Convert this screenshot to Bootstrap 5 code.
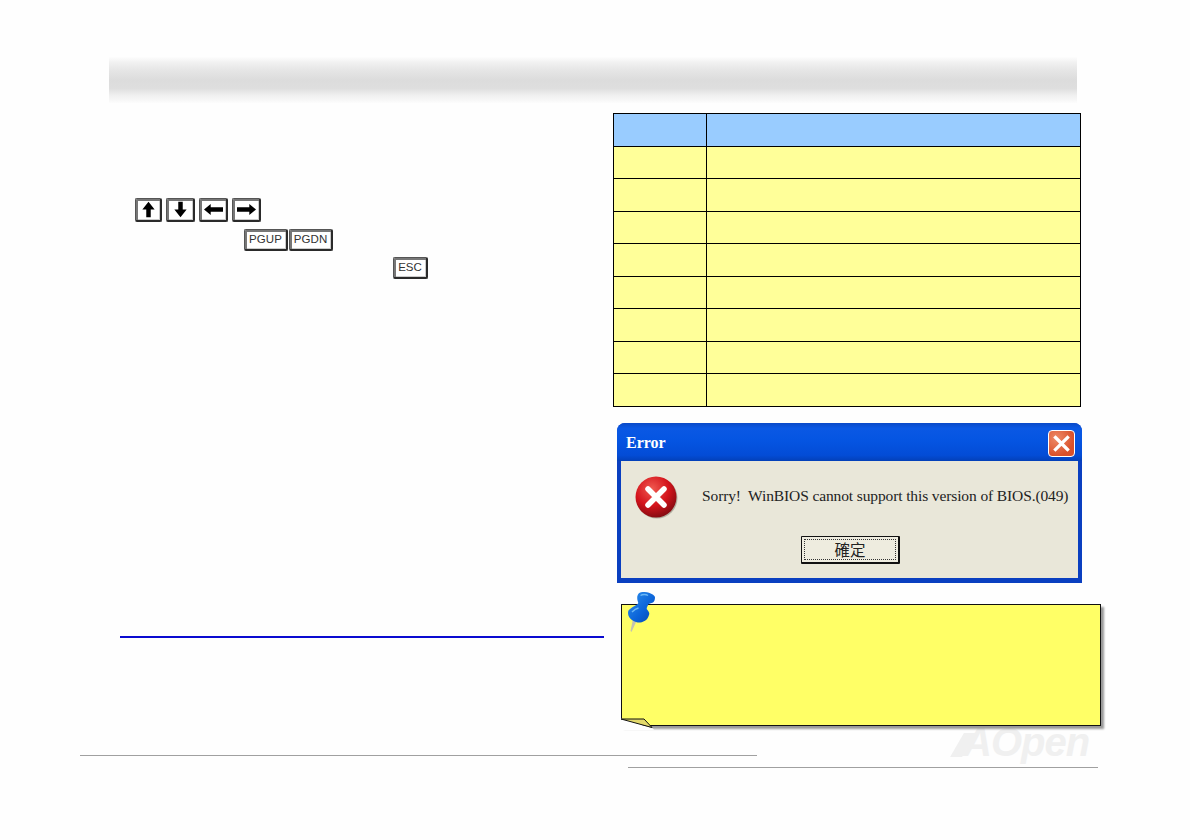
<!DOCTYPE html>
<html lang="en">
<head>
<meta charset="utf-8">
<title>BIOS error</title>
<link href="https://cdn.jsdelivr.net/npm/bootstrap@5.3.0/dist/css/bootstrap.min.css" rel="stylesheet">
<style>
html,body{height:100%;}
body{background:#fefefe;font-family:"Liberation Sans",sans-serif;overflow:hidden;}
.sheet{width:1190px;height:840px;padding-top:57px;position:relative;}
.band{width:968px;height:46px;margin-left:109px;background:linear-gradient(180deg,#fdfdfd 0,#f1f1f1 12%,#e6e6e6 28%,#dcdcdc 50%,#dedede 68%,#f0f0f0 84%,#fcfcfc 100%);}
.main-row{margin-top:10px;height:632px;}
.left-col{width:484px;margin-left:120px;padding-top:85px;}
.right-col{width:468px;margin-left:9px;}
.keyrow-a{margin-left:15px;height:24px;gap:4px;}
.keyrow-b{margin-left:124px;margin-top:7px;height:22px;gap:1px;}
.keyrow-c{margin-left:273px;margin-top:6px;height:22px;}
.kcap{display:flex;align-items:center;justify-content:center;background:#fff;color:#333;font-size:11.5px;line-height:1;
  border:1px solid #555;border-right:2px solid #2a2a2a;border-bottom:2px solid #2a2a2a;box-shadow:inset 1px 1px 0 1px #777,inset -1px -1px 0 0 #ccc;border-radius:2px;}
.kcap svg{width:19px;height:19px;}
.k-up{width:27px;height:24px;}.k-arrow{width:29px;height:24px;}
.k-pg{width:44px;height:22px;letter-spacing:.1px;}
.k-esc{width:35px;height:22px;}
.blue-rule{height:2px;background:#0a0ad0;margin-top:357px;}
.spec-table{width:468px;table-layout:fixed;border-collapse:collapse;margin:0;}
.spec-table td,.spec-table th{border:1px solid #000;height:32.5px;padding:0;background:#ffff99;font-size:10px;}
.spec-table th{background:#99ccff;}
.c-one{width:93px;}
.xp-win{width:465px;height:160px;margin:16px 0 0 4px;background:#0a3fc0;border-radius:8px 8px 0 0;padding:0 4px;}
.xp-title{height:38px;margin:0 -4px;padding:3px 7px 0 9px;border-radius:8px 8px 0 0;background:linear-gradient(180deg,#0a4ac8 0,#0a58e4 14%,#0555e2 45%,#034cd6 85%,#0340b8 100%);color:#fff;font:bold 16px "Liberation Serif",serif;}
.xp-close{width:27px;height:27px;background:radial-gradient(circle at 30% 30%,#ee8b68,#d9502a 70%);border:1px solid #fff;border-radius:4px;}
.xp-close svg{width:100%;height:100%;display:block;}
.xp-body{height:117px;background:#e9e7d9;color:#222;padding-top:14px;}
.xp-icon{width:44px;height:44px;margin-left:13px;flex:none;}
.xp-msg{margin-left:24px;margin-top:11px;font:15.5px/20px "Liberation Serif",serif;white-space:nowrap;letter-spacing:-.12px;}
.xp-btn{display:block;width:99px;height:28px;margin:17px 0 0 180px;padding:2px;background:#eeecdf;border:1px solid #111;border-right-width:2px;border-bottom-width:2px;border-radius:1px;color:#222;font:15.5px/18px "Noto Sans CJK TC",sans-serif;}
.xp-btn span{display:block;height:100%;border:1px dotted #333;line-height:18px;}
.memo{width:480px;height:122px;margin:21px 0 0 8px;background:#ffff66;border:1.5px solid #111;box-shadow:3px 3px 2px #999;position:relative;z-index:1;}
.memo-fold{position:absolute;left:-2px;bottom:-5px;width:34px;height:12px;}
.memo-pin{position:absolute;left:3.5px;top:-15.5px;width:30px;height:44px;}
.rule-one{position:absolute;left:80px;top:755px;width:677px;height:1px;background:#a0a0a0;}
.rule-two{position:absolute;left:628px;top:767px;width:470px;height:1px;background:#a0a0a0;}
.wmark{position:absolute;left:955px;top:724px;height:36px;color:#f0f0f0;font:italic bold 40px/36px "Liberation Sans",sans-serif;white-space:nowrap;letter-spacing:-1px;}
.wmark i{display:inline-block;width:12px;height:24px;margin:0 -6px 0 2px;background:#f0f0f0;transform:skewX(-30deg);vertical-align:-1px;}
</style>
</head>
<body>
<div class="sheet">
  <div class="band"></div>
  <div class="d-flex main-row">
    <div class="left-col">
      <div class="d-flex keyrow-a">
        <div class="kcap k-up"><svg viewBox="0 0 17 17"><path d="M8.500 1.500 14 8.500H10.500V15.500H6.500V8.500H3Z" fill="#000"/></svg></div>
        <div class="kcap k-arrow"><svg viewBox="0 0 17 17"><path d="M8.500 15.500 14 8.500H10.500V1.500H6.500V8.500H3Z" fill="#000"/></svg></div>
        <div class="kcap k-arrow"><svg viewBox="0 0 17 17"><path d="M0 8.500 6 3.500V6.500H17V10.500H6V13.500Z" fill="#000"/></svg></div>
        <div class="kcap k-arrow"><svg viewBox="0 0 17 17"><path d="M17 8.500 11 3.500V6.500H0V10.500H11V13.500Z" fill="#000"/></svg></div>
      </div>
      <div class="d-flex keyrow-b">
        <div class="kcap k-pg">PGUP</div>
        <div class="kcap k-pg">PGDN</div>
      </div>
      <div class="d-flex keyrow-c">
        <div class="kcap k-esc">ESC</div>
      </div>
      <div class="blue-rule"></div>
    </div>
    <div class="right-col">
      <table class="spec-table">
        <colgroup><col class="c-one"><col></colgroup>
        <thead><tr><th></th><th></th></tr></thead>
        <tbody>
          <tr><td></td><td></td></tr>
          <tr><td></td><td></td></tr>
          <tr><td></td><td></td></tr>
          <tr><td></td><td></td></tr>
          <tr><td></td><td></td></tr>
          <tr><td></td><td></td></tr>
          <tr><td></td><td></td></tr>
          <tr><td></td><td></td></tr>
        </tbody>
      </table>
      <div class="xp-win">
        <div class="xp-title d-flex align-items-center justify-content-between">
          <span>Error</span>
          <div class="xp-close"><svg viewBox="0 0 27 27"><path d="M7 7 20 20M20 7 7 20" stroke="#fff" stroke-width="3.500" stroke-linecap="square"/></svg></div>
        </div>
        <div class="xp-body">
          <div class="d-flex">
            <svg class="xp-icon" viewBox="0 0 44 44">
              <defs><radialGradient id="redg" cx="40%" cy="30%" r="75%"><stop offset="0" stop-color="#f05a50"/><stop offset=".55" stop-color="#d4141c"/><stop offset="1" stop-color="#7c0a10"/></radialGradient></defs>
              <circle cx="23" cy="23" r="20.500" fill="#8a8878" opacity=".6"/>
              <circle cx="22" cy="22" r="20.500" fill="url(#redg)"/>
              <path d="M14 14 30 30M30 14 14 30" stroke="#fff" stroke-width="5.500" stroke-linecap="round"/>
            </svg>
            <div class="xp-msg">Sorry!&nbsp; WinBIOS cannot support this version of BIOS.(049)</div>
          </div>
          <button type="button" class="xp-btn"><span>確定</span></button>
        </div>
      </div>
      <div class="memo">
        <svg class="memo-pin" viewBox="0 0 30 44">
          <defs><linearGradient id="ping" x1="0" y1="0" x2="1" y2="1"><stop offset="0" stop-color="#2f92ee"/><stop offset=".6" stop-color="#0a62d8"/><stop offset="1" stop-color="#0848a8"/></linearGradient></defs>
          <path d="M11 31 5.500 43 4.500 42 7 30Z" fill="#c4c4b0"/>
          <path d="M11.300 7.300C12 5 13 3.500 15 3.300 18 2.600 21 2.800 23 3.800 26 5 29 6.500 29 8.500 29 11 28 13 27 13.500L22.500 15C21.500 17 20.700 18.500 20.700 20 22 21.500 23.500 23.500 23.300 25 22.500 28 21 31 19 31.700 16 33.500 13 33.800 10.700 33.300 7 32 4 30 3.300 28.300 2 26 1.800 24 2.300 21.700 4 19.500 6.500 18 9 16.700 10.500 15.800 11.800 15 12.300 14 11.500 12 11 9.500 11.300 7.300Z" fill="url(#ping)"/>
          <path d="M14.500 6.500C16.500 5 20 5 22 6.500" stroke="#6bb8f6" stroke-width="1.500" fill="none"/>
          <path d="M6 23C8 21 10.500 19.500 12.500 19" stroke="#6bb8f6" stroke-width="1.500" fill="none"/>
        </svg>
        <svg class="memo-fold" viewBox="0 0 34 12">
          <path d="M0 0V12H34L33 10.500Z" fill="#fefefe"/>
          <path d="M1 1H24L32 9.500Z" fill="#e3d96a" stroke="#111" stroke-width="1"/>
        </svg>
      </div>
    </div>
  </div>
  <div class="wmark"><i></i>AOpen</div>
  <div class="rule-one"></div>
  <div class="rule-two"></div>
</div>
<script src="https://cdn.jsdelivr.net/npm/bootstrap@5.3.0/dist/js/bootstrap.bundle.min.js"></script>
</body>
</html>
